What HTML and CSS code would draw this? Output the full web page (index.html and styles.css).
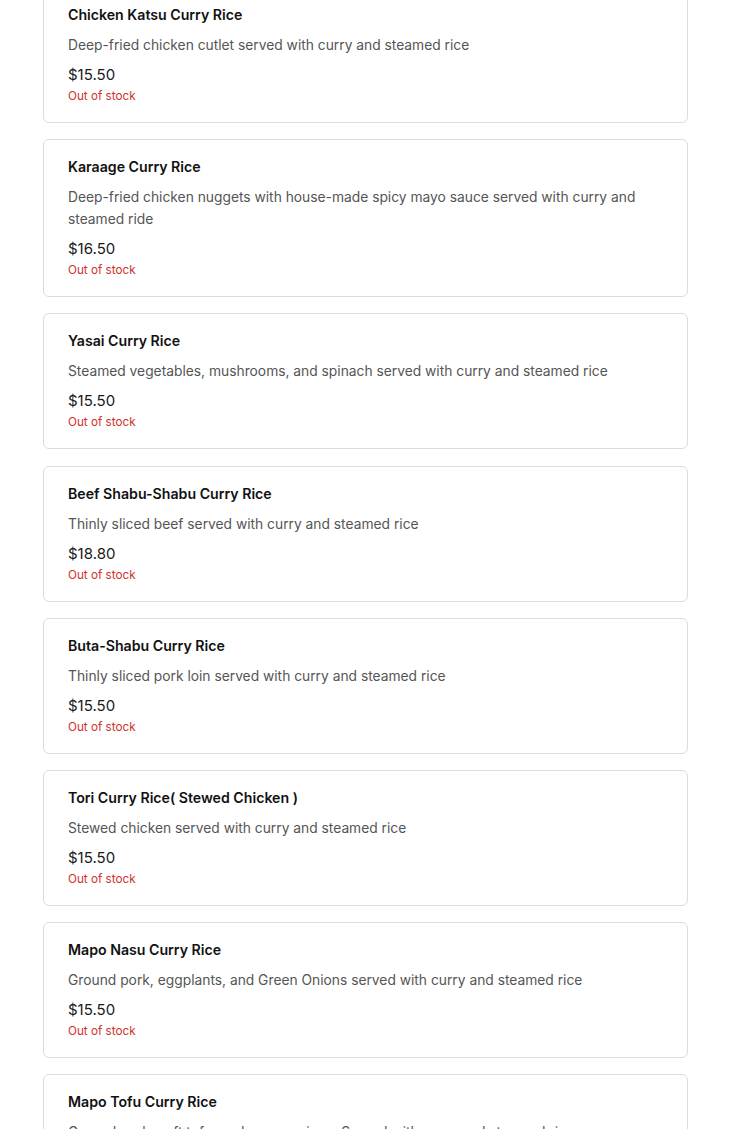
FILE: index.html
```html
<!DOCTYPE html>
<html>
<head>
<meta charset="utf-8">
<link rel="stylesheet" href="styles.css">
</head>
<body>
<div class="list">
  <div class="card">
    <div class="title">Chicken Katsu Curry Rice</div>
    <div class="desc">Deep-fried chicken cutlet served with curry and steamed rice</div>
    <div class="price">$15.50</div>
    <div class="stock">Out of stock</div>
  </div>
  <div class="card">
    <div class="title">Karaage Curry Rice</div>
    <div class="desc">Deep-fried chicken nuggets with house-made spicy mayo sauce served with curry and steamed ride</div>
    <div class="price">$16.50</div>
    <div class="stock">Out of stock</div>
  </div>
  <div class="card">
    <div class="title">Yasai Curry Rice</div>
    <div class="desc">Steamed vegetables, mushrooms, and spinach served with curry and steamed rice</div>
    <div class="price">$15.50</div>
    <div class="stock">Out of stock</div>
  </div>
  <div class="card">
    <div class="title">Beef Shabu-Shabu Curry Rice</div>
    <div class="desc">Thinly sliced beef served with curry and steamed rice</div>
    <div class="price">$18.80</div>
    <div class="stock">Out of stock</div>
  </div>
  <div class="card">
    <div class="title">Buta-Shabu Curry Rice</div>
    <div class="desc">Thinly sliced pork loin served with curry and steamed rice</div>
    <div class="price">$15.50</div>
    <div class="stock">Out of stock</div>
  </div>
  <div class="card">
    <div class="title">Tori Curry Rice( Stewed Chicken )</div>
    <div class="desc">Stewed chicken served with curry and steamed rice</div>
    <div class="price">$15.50</div>
    <div class="stock">Out of stock</div>
  </div>
  <div class="card">
    <div class="title">Mapo Nasu Curry Rice</div>
    <div class="desc">Ground pork, eggplants, and Green Onions served with curry and steamed rice</div>
    <div class="price">$15.50</div>
    <div class="stock">Out of stock</div>
  </div>
  <div class="card">
    <div class="title">Mapo Tofu Curry Rice</div>
    <div class="desc">Ground pork, soft tofu, and green onions. Served with curry and steamed rice</div>
    <div class="price">$15.50</div>
    <div class="stock">Out of stock</div>
  </div>
</div>
</body>
</html>
```
FILE: styles.css
```css
html, body {
  margin: 0;
  padding: 0;
  background: #fff;
  overflow: hidden;
}
body {
  font-family: Inter, "Noto Sans", sans-serif;
}
.list {
  margin: -13px 42px 0 43px;
  display: flex;
  flex-direction: column;
  gap: 16.2px;
}
.card {
  border: 1px solid #dcdcdc;
  border-radius: 6px;
  padding: 16px 24px 18px;
  display: flex;
  flex-direction: column;
}
.title {
  font-size: 14.15px;
  font-weight: 600;
  line-height: 22px;
  color: #111;
}
.desc {
  margin-top: 8px;
  font-size: 13.8px;
  line-height: 22px;
  color: #555;
}
.price {
  margin-top: 8px;
  font-size: 15px;
  line-height: 22px;
  color: #1a1a1a;
}
.stock {
  margin-top: 2px;
  font-size: 11.7px;
  line-height: 16px;
  color: #d0312d;
}
```
